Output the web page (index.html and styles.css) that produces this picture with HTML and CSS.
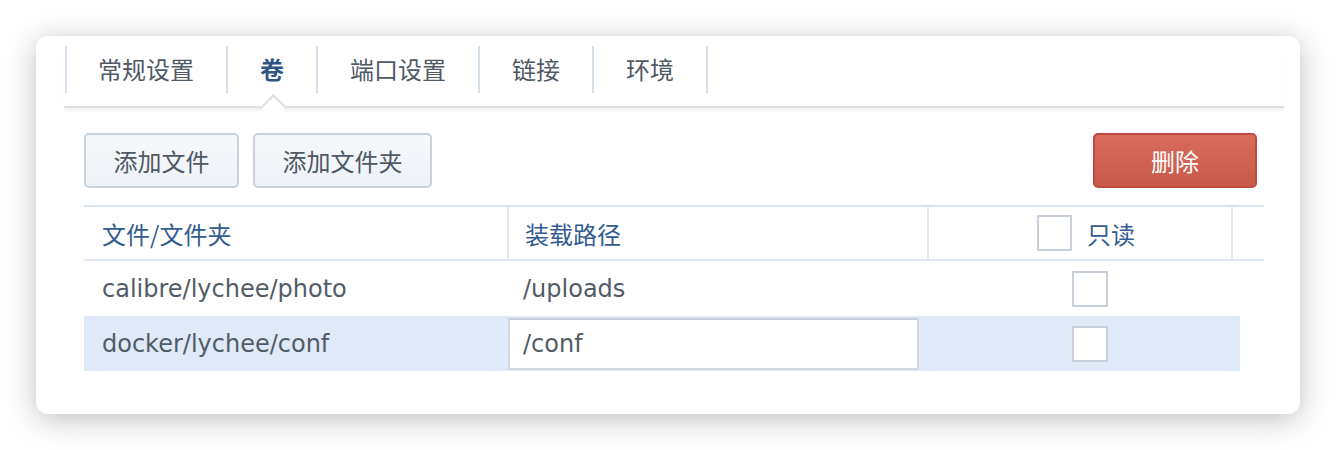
FILE: index.html
```html
<!DOCTYPE html>
<html lang="zh">
<head>
<meta charset="utf-8">
<title>卷</title>
<link rel="stylesheet" href="styles.css">
</head>
<body>
<div class="card">
  <div class="tabs">
    <div class="tab">常规设置</div>
    <div class="tab active">卷</div>
    <div class="tab">端口设置</div>
    <div class="tab">链接</div>
    <div class="tab last">环境</div>
  </div>
  <div class="content">
    <div class="toolbar">
      <button class="btn">添加文件</button>
      <button class="btn">添加文件夹</button>
      <button class="btn danger">删除</button>
    </div>
    <div class="table">
      <div class="thead">
        <div class="th c1">文件/文件夹</div>
        <div class="th c2">装载路径</div>
        <div class="th c3"><span class="chk"></span><span>只读</span></div>
        <div class="th c4"></div>
      </div>
      <div class="row">
        <div class="td c1">calibre/lychee/photo</div>
        <div class="td c2">/uploads</div>
        <div class="td c3"><span class="chk"></span></div>
      </div>
      <div class="row selected">
        <div class="td c1">docker/lychee/conf</div>
        <div class="td c2 edit"><div class="input">/conf</div></div>
        <div class="td c3"><span class="chk"></span></div>
      </div>
    </div>
  </div>
</div>
</body>
</html>
```
FILE: styles.css
```css
* { box-sizing: border-box; }
html, body { margin: 0; background: #fff; }
body {
  padding: 36px;
  font-family: "DejaVu Sans", "Noto Sans CJK SC", sans-serif;
  font-size: 24px;
  color: #525c66;
}
.card {
  width: 1264px;
  height: 378px;
  background: #fff;
  border-radius: 12px;
  box-shadow: 0 5px 30px rgba(0,0,0,0.26);
  padding: 10px 16px 0 28px;
}
.tabs {
  display: flex;
  padding-bottom: 13px;
  border-bottom: 2px solid #dcdfe3;
  box-shadow: 0 3px 3px -1px rgba(0,0,0,0.07);
}
.tab {
  position: relative;
  height: 47px;
  line-height: 46px;
  padding: 0 32px;
  border-left: 2px solid #d6e0ea;
  font-family: "Noto Sans CJK SC", sans-serif;
  color: #4f5964;
}
.tab:first-child { margin-left: 1px; padding-left: 31px; }
.tab.last { border-right: 2px solid #d6e0ea; }
.tab.active { color: #2f5587; font-weight: bold; }
.tab.active::after {
  content: "";
  position: absolute;
  left: 50%;
  top: 52px;
  width: 17px;
  height: 17px;
  margin-left: -8.5px;
  background: #fff;
  border-left: 2px solid #dcdfe3;
  border-top: 2px solid #dcdfe3;
  transform: rotate(45deg);
}
.content { padding: 0 20px 0 20px; }
.toolbar {
  display: flex;
  gap: 14px;
  margin-top: 25px;
}
.btn {
  height: 55px;
  padding: 0 27.5px;
  font: inherit;
  font-family: "Noto Sans CJK SC", sans-serif;
  color: #4f5964;
  background: linear-gradient(#f6f8fb, #eef2f7);
  border: 2px solid #c9d2dc;
  border-radius: 5px;
}
.btn.danger {
  margin-left: auto;
  margin-right: 7px;
  padding: 0 56px;
  color: #fff;
  background: linear-gradient(#d96b5c, #c75a4b);
  border-color: #bf4a3f;
}
.table { margin-top: 17px; }
.thead {
  display: grid;
  grid-template-columns: 423px 420px 304px 1fr;
  height: 56px;
  border-top: 2px solid #dbe3ed;
  border-bottom: 2px solid #e2e8ef;
}
.th {
  display: flex;
  align-items: center;
  color: #325c90;
  font-family: "Noto Sans CJK SC", sans-serif;
}
.th.c1 { padding-left: 18px; }
.th.c2, .th.c3, .th.c4 { border-left: 2px solid #e2e9f2; }
.th.c2 { padding-left: 16px; }
.th.c3 { justify-content: center; gap: 15px; padding-left: 12px; }
.row {
  display: grid;
  grid-template-columns: 423px 420px 1fr;
  width: 1156px;
  height: 55px;
}
.row.selected { background: #dfe9f7; }
.td { display: flex; align-items: center; }
.td.c1 { padding-left: 18px; }
.td.c2 { padding-left: 16px; }
.td.c2.edit { padding: 2px 8px 1px 1px; }
.td.c3 { padding-left: 145px; }
.input {
  width: 100%;
  height: 52px;
  display: flex;
  align-items: center;
  padding-left: 13px;
  background: #fff;
  border: 2px solid #d2d9e1;
  border-top-color: #c5ced8;
}
.chk {
  display: inline-block;
  width: 36px;
  height: 36px;
  background: #fff;
  border: 2px solid #c7cfd9;
  border-radius: 1px;
}
.th .chk { width: 35px; height: 36px; }
```
